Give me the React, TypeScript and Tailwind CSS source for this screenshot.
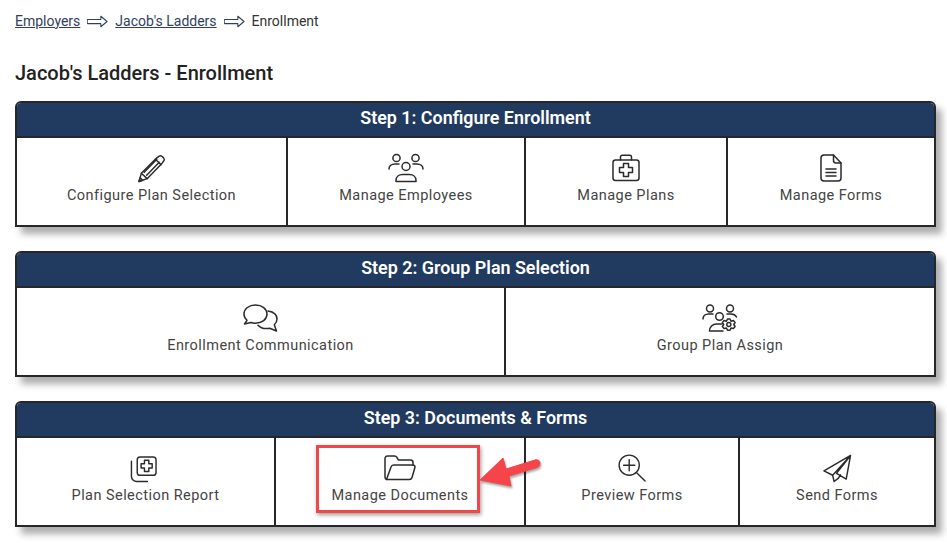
import React from 'react';

const ic = { fill: 'none', stroke: '#2b2b2b', strokeWidth: 1.5, strokeLinecap: 'round', strokeLinejoin: 'round' } as const;

function Pencil() {
  return (
    <svg width="29" height="29" viewBox="0 0 30 30" {...ic}>
      <path d="M2 28.500l2.500-8.500L20.500 4l2.500-1.800c1-.7 2-.6 3 .3l1.500 1.500c.9 1 1 2 .3 3L26 9.500 10.500 25.500z" />
      <path d="M4.500 20l6 5.500M19 5.500l6 5.500M7.500 19l13-13.500M10 22l13-13.500M2 28.500l4-1.200-2.600-2.800z" />
    </svg>
  );
}

function People() {
  return (
    <svg width="36" height="30" viewBox="0 0 36 30" {...ic}>
      <circle cx="8.500" cy="5" r="3.600" />
      <circle cx="27.500" cy="5" r="3.600" />
      <circle cx="18" cy="13.500" r="4" />
      <path d="M1 16c0-3 2.500-5 6-5h4M35 16c0-3-2.500-5-6-5h-4" />
      <path d="M8 28.500v-1c0-4 3-6 6.500-6h7c3.500 0 6.500 2 6.500 6v1z" />
    </svg>
  );
}

function Kit() {
  return (
    <svg width="28" height="28" viewBox="0 0 28 28" {...ic}>
      <rect x="1" y="6" width="26" height="20.500" rx="2.500" />
      <path d="M8.500 6V3c0-1 .7-1.700 1.700-1.700h7.600c1 0 1.700.7 1.700 1.700v3" />
      <path d="M11.500 9.500h5v4h4v5h-4v4h-5v-4h-4v-5h4z" />
    </svg>
  );
}

function Doc() {
  return (
    <svg width="22" height="28" viewBox="0 0 22 28" {...ic}>
      <path d="M13.500 1H4C2.300 1 1 2.300 1 4v20c0 1.700 1.300 3 3 3h14c1.700 0 3-1.300 3-3V9z" />
      <path d="M13.500 1v5.500c0 1.500 1 2.500 2.500 2.500h5" />
      <path d="M6 15h10M6 18.500h10M6 22h10" />
    </svg>
  );
}

function Chat() {
  return (
    <svg width="36" height="28" viewBox="0 0 36 28" {...ic}>
      <path d="M12.500 1C6 1 1 4.700 1 10c0 2.600 1.200 4.700 3 6.300L1.500 20l6.500-1.500c1.400.5 2.900.7 4.500.7 6.500 0 11.500-3.800 11.500-9.100S19 1 12.500 1z" />
      <path d="M25 7c5 .8 9 3.600 9 8 0 2.500-1.100 4.300-2.700 5.800L33.500 27l-6.700-2.800c-1.200.3-2.300.4-3.500.4-3.500 0-6.500-1.300-8.300-3.400" />
    </svg>
  );
}

function PeopleGear() {
  return (
    <svg width="36" height="28" viewBox="0 0 36 28" {...ic}>
      <circle cx="8" cy="4.500" r="3.500" />
      <circle cx="28" cy="4.500" r="3.500" />
      <circle cx="17.500" cy="12.500" r="3.800" />
      <path d="M1 15c0-3 2.300-5 5.500-5H11M25 10h4c2.500 0 4.500 1 5.500 3" />
      <path d="M7.500 27c0-4 3-7 7-7H20M7.500 27H21" />
      <path d="M28 15l1 2.200 2.400-.6 1.700 1.900-1.300 2 1.300 2-1.700 2.100-2.400-.6-1 2.200h-2.500l-1-2.200-2.400.6-1.700-2.100 1.300-2-1.300-2 1.700-1.900 2.400.6 1-2.200z" />
      <circle cx="26.800" cy="20.500" r="2" />
    </svg>
  );
}

function Report() {
  return (
    <svg width="27" height="27" viewBox="0 0 28 28" className="-translate-x-[2px] translate-y-[1px]" {...ic}>
      <rect x="7.500" y="1" width="19.500" height="19" rx="3" />
      <path d="M15 4.500h4.500v3.500H23v4.500h-3.500V16H15v-3.500h-3.500V8H15z" />
      <path d="M1.500 5.500v15.500c0 3 2.500 5.500 5.500 5.500h11" />
    </svg>
  );
}

function Folder() {
  return (
    <svg width="32" height="26" viewBox="0 0 32 26" {...ic}>
      <path d="M2.500 24.500C1.500 24 1 23 1 22V3.500C1 2.200 2 1 3.500 1h7c1 0 1.700.4 2.200 1.200L14.500 5h12c1.500 0 2.500 1 2.500 2.500V10" />
      <path d="M2.500 24.500 7 12c.4-1.200 1.300-2 2.600-2h19.300c1.500 0 2.400 1.200 2 2.500L28 22.500c-.4 1.300-1.400 2-2.700 2z" />
    </svg>
  );
}

function ZoomPlus() {
  return (
    <svg width="28" height="28" viewBox="0 0 30 30" {...ic}>
      <circle cx="12" cy="12" r="10.800" />
      <path d="M12 6v12M6 12h12M20 20l9 9" />
    </svg>
  );
}

function Plane() {
  return (
    <svg width="29" height="29" viewBox="0 0 30 30" {...ic}>
      <path d="M28.500 1.500 1 17.500l9 4.500zM28.500 1.500 24 26l-10-6zM28.500 1.500 10 22l1.500 6.500 4.500-3.500 2-3.500" />
    </svg>
  );
}

function BreadArrow() {
  return (
    <svg width="21" height="13" viewBox="0 0 22 13" className="shrink-0" fill="none" stroke="#2f3f5c" strokeWidth="1.100" strokeLinejoin="round">
      <path d="M.6 4.300h13.900V1l6.500 5.500-6.500 5.500V8.700H.6c-.5-1.200-.5-3.200 0-4.400z" />
    </svg>
  );
}

type Item = { label: string; icon: React.ReactNode };

function Step({ title, cols, items, children }: { title: string; cols: string; items: Item[]; children?: React.ReactNode }) {
  return (
    <section className="relative rounded-t-[6px] border-2 border-[#25272b] shadow-[6px_7px_7px_rgba(60,60,60,0.42)]">
      <div className="h-[33px] rounded-t-[4px] bg-[#213a5f] text-center text-[17.900px] leading-[30px] font-semibold text-white">
        {title}
      </div>
      <div className={`grid h-[89px] border-t-2 border-[#25272b] bg-white ${cols}`}>
        {items.map((item, i) => (
          <div key={item.label} className={`flex flex-col items-center pt-[15px] ${i > 0 ? 'border-l-2 border-[#25272b]' : ''}`}>
            <div className="flex h-[30px] items-center justify-center">{item.icon}</div>
            <span className="mt-[2px] text-[14.500px] leading-[22px] tracking-[0.45px] text-[#444]">{item.label}</span>
          </div>
        ))}
      </div>
      {children}
    </section>
  );
}

export default function App() {
  return (
    <div className="h-[543px] w-[947px] overflow-hidden bg-white px-[15px] pt-[12px] font-['Roboto',sans-serif]">
      <nav className="flex h-[18px] items-center text-[14px] text-[#333]">
        <a className="text-[#2f3f5c] underline" href="#">Employers</a>
        <span className="mx-[7px] flex"><BreadArrow /></span>
        <a className="text-[#2f3f5c] underline" href="#">Jacob's Ladders</a>
        <span className="mx-[7px] flex"><BreadArrow /></span>
        <span>Enrollment</span>
      </nav>
      <h1 className="mt-[32px] mb-[16px] h-[23px] text-[20px] leading-[23px] font-medium text-[#222]">Jacob's Ladders - Enrollment</h1>
      <div className="flex w-[921px] flex-col gap-[24px]">
        <Step
          title="Step 1: Configure Enrollment"
          cols="grid-cols-[269px_238px_202px_1fr]"
          items={[
            { label: 'Configure Plan Selection', icon: <Pencil /> },
            { label: 'Manage Employees', icon: <People /> },
            { label: 'Manage Plans', icon: <Kit /> },
            { label: 'Manage Forms', icon: <Doc /> },
          ]}
        />
        <Step
          title="Step 2: Group Plan Selection"
          cols="grid-cols-[487px_1fr]"
          items={[
            { label: 'Enrollment Communication', icon: <Chat /> },
            { label: 'Group Plan Assign', icon: <PeopleGear /> },
          ]}
        />
        <Step
          title="Step 3: Documents & Forms"
          cols="grid-cols-[257px_250px_214px_1fr]"
          items={[
            { label: 'Plan Selection Report', icon: <Report /> },
            { label: 'Manage Documents', icon: <Folder /> },
            { label: 'Preview Forms', icon: <ZoomPlus /> },
            { label: 'Send Forms', icon: <Plane /> },
          ]}
        >
          {/* callout drawn over the screenshot */}
          <div className="absolute top-[42px] left-[299px] h-[68px] w-[164px] border-[3px] border-[#f04848] shadow-[1px_2px_4px_rgba(0,0,0,0.4)]" />
          <svg className="absolute top-[52px] left-[461px] drop-shadow-[1px_2px_1px_rgba(0,0,0,0.35)]" width="66" height="36" viewBox="0 0 66 36">
            <path d="M2 25 25 3l3 11 29-9c3-1 5 1 5 3s-1 4-3 4.500L31 21l2 10z" fill="#f5454a" stroke="#f5454a" strokeLinejoin="round" />
          </svg>
        </Step>
      </div>
    </div>
  );
}
